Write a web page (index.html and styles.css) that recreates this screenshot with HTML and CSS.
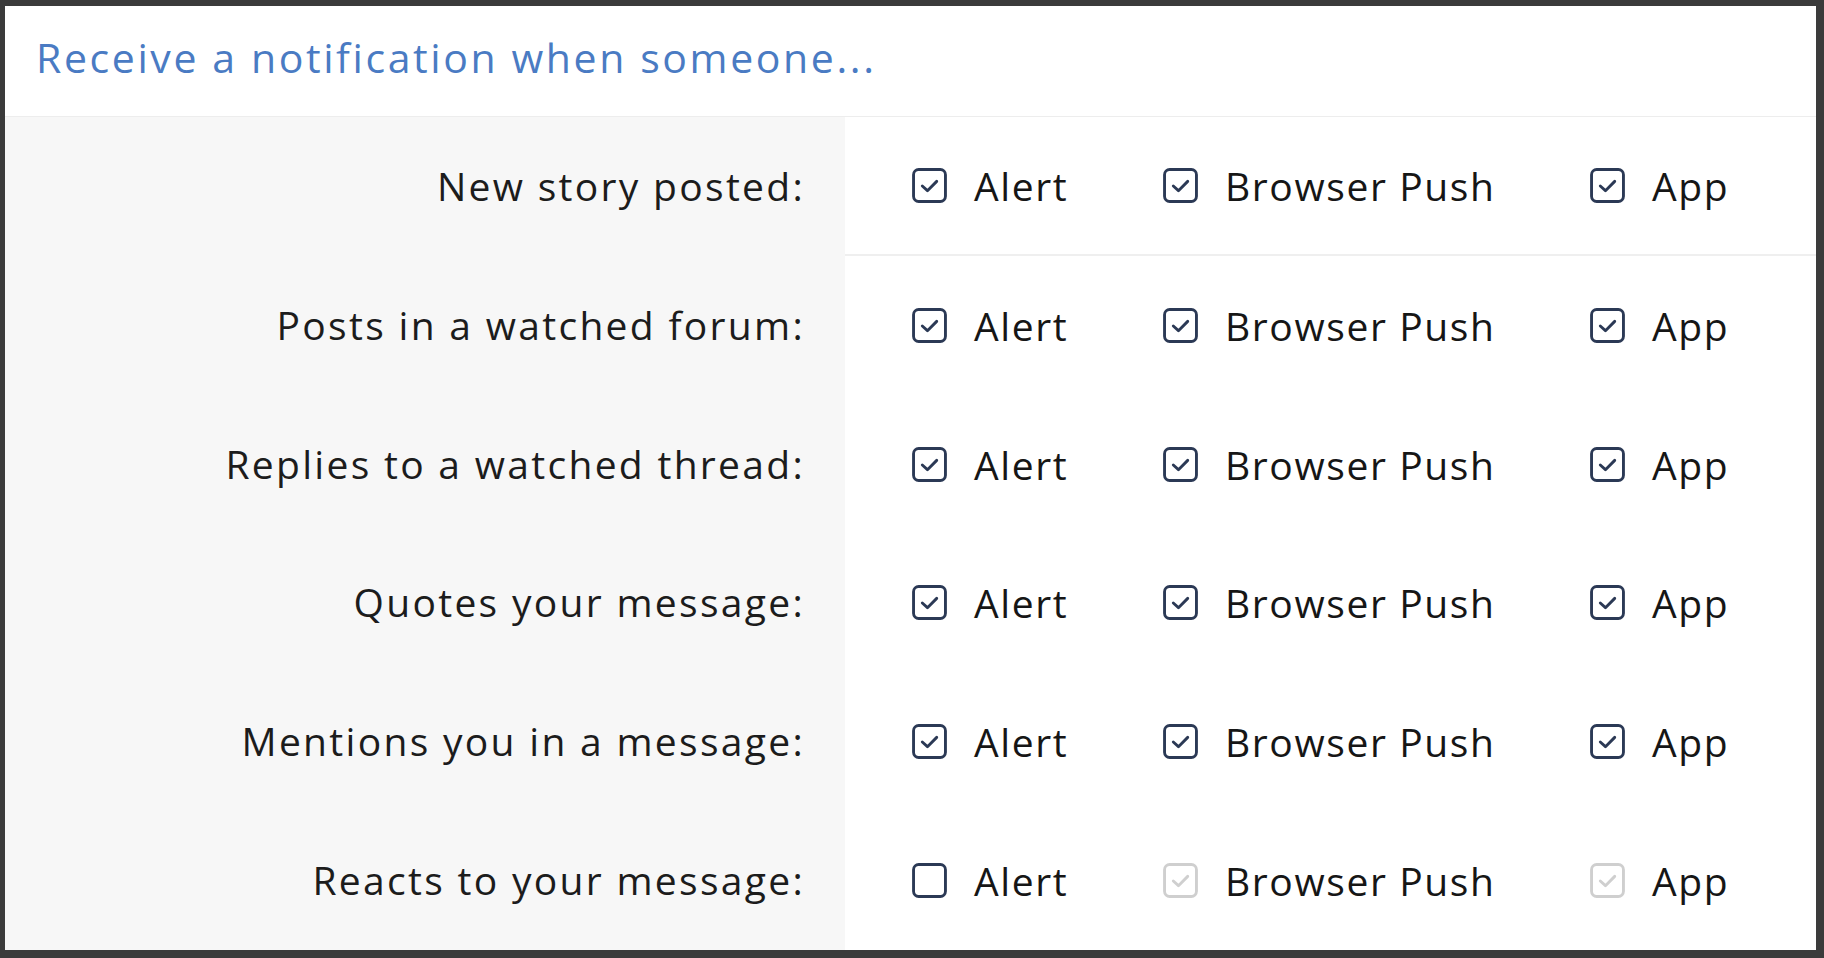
FILE: index.html
```html
<!DOCTYPE html>
<html lang="en">
<head>
<meta charset="utf-8">
<title>Notification preferences</title>
<link rel="stylesheet" href="styles.css">
</head>
<body>
<div class="panel">
  <div class="panel-header">
    <h2 class="panel-title">Receive a notification when someone...</h2>
  </div>
  <div class="rows">
    <div class="row row-first">
      <div class="row-label">New story posted:</div>
      <div class="row-options">
        <label class="opt"><span class="cb on"><svg viewBox="0 0 34 34"><rect x="1.5" y="1.5" width="31" height="31" rx="5"/><path d="M10 17.5l5 4.5 9-9"/></svg></span>Alert</label>
        <label class="opt"><span class="cb on"><svg viewBox="0 0 34 34"><rect x="1.5" y="1.5" width="31" height="31" rx="5"/><path d="M10 17.5l5 4.5 9-9"/></svg></span>Browser Push</label>
        <label class="opt"><span class="cb on"><svg viewBox="0 0 34 34"><rect x="1.5" y="1.5" width="31" height="31" rx="5"/><path d="M10 17.5l5 4.5 9-9"/></svg></span>App</label>
      </div>
    </div>
    <div class="row">
      <div class="row-label">Posts in a watched forum:</div>
      <div class="row-options">
        <label class="opt"><span class="cb on"><svg viewBox="0 0 34 34"><rect x="1.5" y="1.5" width="31" height="31" rx="5"/><path d="M10 17.5l5 4.5 9-9"/></svg></span>Alert</label>
        <label class="opt"><span class="cb on"><svg viewBox="0 0 34 34"><rect x="1.5" y="1.5" width="31" height="31" rx="5"/><path d="M10 17.5l5 4.5 9-9"/></svg></span>Browser Push</label>
        <label class="opt"><span class="cb on"><svg viewBox="0 0 34 34"><rect x="1.5" y="1.5" width="31" height="31" rx="5"/><path d="M10 17.5l5 4.5 9-9"/></svg></span>App</label>
      </div>
    </div>
    <div class="row">
      <div class="row-label">Replies to a watched thread:</div>
      <div class="row-options">
        <label class="opt"><span class="cb on"><svg viewBox="0 0 34 34"><rect x="1.5" y="1.5" width="31" height="31" rx="5"/><path d="M10 17.5l5 4.5 9-9"/></svg></span>Alert</label>
        <label class="opt"><span class="cb on"><svg viewBox="0 0 34 34"><rect x="1.5" y="1.5" width="31" height="31" rx="5"/><path d="M10 17.5l5 4.5 9-9"/></svg></span>Browser Push</label>
        <label class="opt"><span class="cb on"><svg viewBox="0 0 34 34"><rect x="1.5" y="1.5" width="31" height="31" rx="5"/><path d="M10 17.5l5 4.5 9-9"/></svg></span>App</label>
      </div>
    </div>
    <div class="row">
      <div class="row-label">Quotes your message:</div>
      <div class="row-options">
        <label class="opt"><span class="cb on"><svg viewBox="0 0 34 34"><rect x="1.5" y="1.5" width="31" height="31" rx="5"/><path d="M10 17.5l5 4.5 9-9"/></svg></span>Alert</label>
        <label class="opt"><span class="cb on"><svg viewBox="0 0 34 34"><rect x="1.5" y="1.5" width="31" height="31" rx="5"/><path d="M10 17.5l5 4.5 9-9"/></svg></span>Browser Push</label>
        <label class="opt"><span class="cb on"><svg viewBox="0 0 34 34"><rect x="1.5" y="1.5" width="31" height="31" rx="5"/><path d="M10 17.5l5 4.5 9-9"/></svg></span>App</label>
      </div>
    </div>
    <div class="row">
      <div class="row-label">Mentions you in a message:</div>
      <div class="row-options">
        <label class="opt"><span class="cb on"><svg viewBox="0 0 34 34"><rect x="1.5" y="1.5" width="31" height="31" rx="5"/><path d="M10 17.5l5 4.5 9-9"/></svg></span>Alert</label>
        <label class="opt"><span class="cb on"><svg viewBox="0 0 34 34"><rect x="1.5" y="1.5" width="31" height="31" rx="5"/><path d="M10 17.5l5 4.5 9-9"/></svg></span>Browser Push</label>
        <label class="opt"><span class="cb on"><svg viewBox="0 0 34 34"><rect x="1.5" y="1.5" width="31" height="31" rx="5"/><path d="M10 17.5l5 4.5 9-9"/></svg></span>App</label>
      </div>
    </div>
    <div class="row">
      <div class="row-label">Reacts to your message:</div>
      <div class="row-options">
        <label class="opt"><span class="cb off"><svg viewBox="0 0 34 34"><rect x="1.5" y="1.5" width="31" height="31" rx="5"/></svg></span>Alert</label>
        <label class="opt"><span class="cb dis"><svg viewBox="0 0 34 34"><rect x="1.5" y="1.5" width="31" height="31" rx="5"/><path d="M10 17.5l5 4.5 9-9"/></svg></span>Browser Push</label>
        <label class="opt"><span class="cb dis"><svg viewBox="0 0 34 34"><rect x="1.5" y="1.5" width="31" height="31" rx="5"/><path d="M10 17.5l5 4.5 9-9"/></svg></span>App</label>
      </div>
    </div>
  </div>
</div>
</body>
</html>
```

FILE: styles.css
```css
* { box-sizing: border-box; }

html, body {
  margin: 0;
  padding: 0;
  height: 100%;
}

body {
  background: #3b3b3b;
  font-family: "Open Sans", "Liberation Sans", sans-serif;
  color: #1b1b1b;
}

.panel {
  margin: 6px 8px 8px 5px;
  height: 944px;
  background: #ffffff;
  display: flex;
  flex-direction: column;
}

.panel-header {
  height: 111px;
  padding: 0 0 8px 31px;
  display: flex;
  align-items: center;
  border-bottom: 1px solid #ededed;
  flex: none;
}

.panel-title {
  margin: 0;
  font-weight: 400;
  font-size: 41px;
  color: #4a7bc3;
  letter-spacing: 2.6px;
}

.rows {
  flex: 1;
  display: grid;
  grid-template-columns: 840px 1fr;
  grid-auto-rows: 1fr;
}

.row {
  display: contents;
}

.row-label {
  background: #f7f7f7;
  display: flex;
  align-items: center;
  justify-content: flex-end;
  padding: 0 40px 2px 0;
  font-size: 39px;
  letter-spacing: 2.3px;
  color: #1c1c1c;
}

.row-options {
  display: grid;
  grid-template-columns: 251px 427px auto;
  align-items: center;
  padding-left: 67px;
  background: #ffffff;
}

.row-first .row-options {
  border-bottom: 2px solid #efefef;
}

.opt {
  display: flex;
  align-items: center;
  gap: 27px;
  font-size: 39px;
  letter-spacing: 1.6px;
  color: #161616;
}

.cb {
  width: 35px;
  height: 35px;
  display: block;
  flex: none;
}

.cb svg {
  width: 35px;
  height: 35px;
  display: block;
  fill: none;
  stroke-width: 2.8;
  stroke-linecap: round;
  stroke-linejoin: round;
}

.cb.on svg,
.cb.off svg {
  stroke: #2b3955;
}

.cb.dis svg {
  stroke: #cfcfcf;
}
```
